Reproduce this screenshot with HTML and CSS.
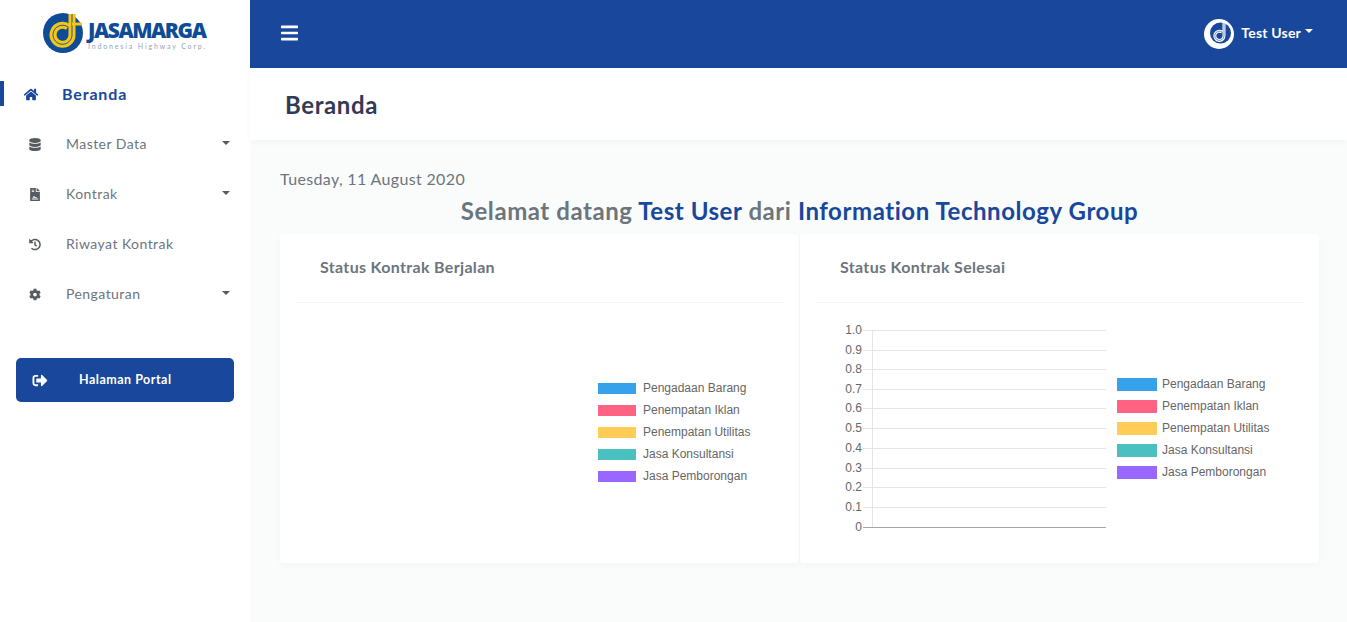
FILE: index.html
```html
<!DOCTYPE html>
<html lang="en">
<head>
  <meta charset="UTF-8" />
  <title>Beranda</title>
  <link rel="stylesheet" href="styles.css">
</head>
<body>
<div class="wrapper">

  <!-- Sidebar -->
  <aside class="sidebar">
    <div class="brand">
      <svg class="brand-mark" viewBox="0 0 40 40">
        <circle cx="20" cy="20" r="20" fill="#0f4c97"/>
        <path d="M25 14A9.5 9.5 0 1 0 29 21V1" fill="none" stroke="#f5c518" stroke-width="7"/>
        <path d="M25 14A9.5 9.5 0 1 0 29 21V1" fill="none" stroke="#0f4c97" stroke-width="0.9"/>
        <path d="M29 11H39" stroke="#f5c518" stroke-width="3"/>
      </svg>
      <div class="brand-text">
        <div class="brand-name">JASAMARGA</div>
        <div class="brand-sub">Indonesia Highway Corp.</div>
      </div>
    </div>

    <ul class="menu">
      <li class="menu-item active">
        <svg class="menu-icon" viewBox="0 0 576 512"><path d="M280.37 148.26L96 300.11V464a16 16 0 0 0 16 16l112.06-.29a16 16 0 0 0 15.92-16V368a16 16 0 0 1 16-16h64a16 16 0 0 1 16 16v95.64a16 16 0 0 0 16 16.05L464 480a16 16 0 0 0 16-16V300L295.67 148.26a12.19 12.19 0 0 0-15.3 0zM571.6 251.47L488 182.56V44.05a12 12 0 0 0-12-12h-56a12 12 0 0 0-12 12v72.61L318.47 43a48 48 0 0 0-61 0L4.34 251.47a12 12 0 0 0-1.6 16.9l25.5 31A12 12 0 0 0 45.15 301l235.22-193.74a12.19 12.19 0 0 1 15.3 0L530.9 301a12 12 0 0 0 16.9-1.6l25.5-31a12 12 0 0 0-1.7-16.93z"/></svg>
        <span class="menu-label">Beranda</span>
      </li>
      <li class="menu-item">
        <svg class="menu-icon" viewBox="0 0 448 512"><path d="M448 73.143v45.714C448 159.143 347.667 192 224 192S0 159.143 0 118.857V73.143C0 32.857 100.333 0 224 0s224 32.857 224 73.143zM448 176v102.857C448 319.143 347.667 352 224 352S0 319.143 0 278.857V176c48.125 33.143 136.208 48.572 224 48.572S399.874 209.143 448 176zm0 160v102.857C448 479.143 347.667 512 224 512S0 479.143 0 438.857V336c48.125 33.143 136.208 48.572 224 48.572S399.874 369.143 448 336z"/></svg>
        <span class="menu-label">Master Data</span>
        <span class="caret"></span>
      </li>
      <li class="menu-item">
        <svg class="menu-icon" viewBox="0 0 384 512"><path d="M377 105L279.1 7c-4.5-4.5-10.6-7-17-7H256v128h128v-6.1c0-6.3-2.5-12.4-7-16.9z"/><path fill-rule="evenodd" d="M224 136V0H24C10.7 0 0 10.7 0 24v464c0 13.3 10.7 24 24 24h336c13.3 0 24-10.7 24-24V160H248c-13.2 0-24-10.8-24-24zM64 64h96v32H64zm0 64h96v32H64zm0 288v32h256v-32zm32-32c30-50 50-70 64-70s20 40 40 40 30-10 60 0v30z"/></svg>
        <span class="menu-label">Kontrak</span>
        <span class="caret"></span>
      </li>
      <li class="menu-item">
        <svg class="menu-icon" viewBox="0 0 512 512"><path d="M504 255.531c.253 136.64-111.18 248.372-247.82 248.468-59.015.042-113.223-20.53-155.822-54.911-11.077-8.94-11.905-25.541-1.839-35.607l11.267-11.267c8.609-8.609 22.353-9.551 31.891-1.984C173.062 425.135 212.781 440 256 440c101.705 0 184-82.311 184-184 0-101.705-82.311-184-184-184-48.814 0-93.149 18.969-126.068 49.932l50.754 50.754c10.08 10.08 2.941 27.314-11.313 27.314H24c-8.837 0-16-7.163-16-16V38.627c0-14.254 17.234-21.393 27.314-11.314l49.372 49.372C129.209 34.136 189.552 8 256 8c136.81 0 247.747 110.78 248 247.531zm-180.912 78.784l9.823-12.63c8.138-10.463 6.253-25.542-4.21-33.679L288 256.349V152c0-13.255-10.745-24-24-24h-16c-13.255 0-24 10.745-24 24v135.651l65.409 50.874c10.463 8.137 25.541 6.253 33.679-4.21z"/></svg>
        <span class="menu-label">Riwayat Kontrak</span>
      </li>
      <li class="menu-item">
        <svg class="menu-icon" viewBox="0 0 512 512"><path d="M487.4 315.7l-42.6-24.6c4.3-23.2 4.3-47 0-70.2l42.6-24.6c4.9-2.8 7.1-8.6 5.5-14-11.1-35.6-30-67.8-54.7-94.6-3.8-4.1-10-5.1-14.8-2.3L380.8 110c-17.9-15.4-38.5-27.3-60.8-35.1V25.8c0-5.6-3.9-10.5-9.4-11.7-36.7-8.2-74.3-7.8-109.2 0-5.5 1.2-9.4 6.1-9.4 11.7V75c-22.2 7.9-42.8 19.8-60.8 35.1L88.7 85.5c-4.9-2.8-11-1.9-14.8 2.3-24.7 26.7-43.6 58.9-54.7 94.6-1.7 5.4.6 11.2 5.5 14L67.3 221c-4.3 23.2-4.3 47 0 70.2l-42.6 24.6c-4.9 2.8-7.1 8.6-5.5 14 11.1 35.6 30 67.8 54.7 94.6 3.8 4.1 10 5.1 14.8 2.3l42.6-24.6c17.9 15.4 38.5 27.3 60.8 35.1v49.2c0 5.6 3.9 10.5 9.4 11.7 36.7 8.2 74.3 7.8 109.2 0 5.5-1.2 9.4-6.1 9.4-11.7v-49.2c22.2-7.9 42.8-19.8 60.8-35.1l42.6 24.6c4.9 2.8 11 1.9 14.8-2.3 24.7-26.7 43.6-58.9 54.7-94.6 1.5-5.5-.7-11.3-5.6-14.1zM256 336c-44.1 0-80-35.9-80-80s35.9-80 80-80 80 35.9 80 80-35.9 80-80 80z"/></svg>
        <span class="menu-label">Pengaturan</span>
        <span class="caret"></span>
      </li>
    </ul>

    <a class="portal-btn" href="#">
      <svg class="portal-icon" viewBox="0 0 512 512"><path d="M497 273L329 441c-15 15-41 4.5-41-17v-96H152c-13.3 0-24-10.7-24-24v-96c0-13.3 10.7-24 24-24h136V88c0-21.4 25.9-32 41-17l168 168c9.3 9.4 9.3 24.6 0 34zM192 436v-40c0-6.6-5.4-12-12-12H96c-17.7 0-32-14.3-32-32V160c0-17.7 14.3-32 32-32h84c6.6 0 12-5.4 12-12V76c0-6.6-5.4-12-12-12H96c-53 0-96 43-96 96v192c0 53 43 96 96 96h84c6.6 0 12-5.4 12-12z"/></svg>
      <span>Halaman Portal</span>
    </a>
  </aside>

  <div class="main">
    <!-- Topbar -->
    <header class="topbar">
      <svg class="bars" viewBox="0 0 448 512"><path d="M16 132h416c8.837 0 16-7.163 16-16V76c0-8.837-7.163-16-16-16H16C7.163 60 0 67.163 0 76v40c0 8.837 7.163 16 16 16zm0 160h416c8.837 0 16-7.163 16-16v-40c0-8.837-7.163-16-16-16H16c-8.837 0-16 7.163-16 16v40c0 8.837 7.163 16 16 16zm0 160h416c8.837 0 16-7.163 16-16v-40c0-8.837-7.163-16-16-16H16c-8.837 0-16 7.163-16 16v40c0 8.837 7.163 16 16 16z"/></svg>
      <div class="user">
        <svg class="avatar" viewBox="0 0 30 30">
          <circle cx="15" cy="15" r="15" fill="#fff"/>
          <circle cx="16.5" cy="14" r="10.5" fill="#18479b"/>
          <path d="M18 13A4.6 4.6 0 1 0 20 17V4" fill="none" stroke="#fff" stroke-width="3"/>
          <path d="M18 13A4.6 4.6 0 1 0 20 17V4" fill="none" stroke="#18479b" stroke-width="0.6"/>
        </svg>
        <span class="user-name">Test User</span>
        <span class="caret caret-white"></span>
      </div>
    </header>

    <div class="page-title"><h1>Beranda</h1></div>

    <main class="content">
      <p class="date">Tuesday, 11 August 2020</p>
      <h2 class="welcome">Selamat datang <span>Test User</span> dari <span>Information Technology Group</span></h2>

      <div class="cards">
        <section class="card">
          <div class="card-head"><h3>Status Kontrak Berjalan</h3></div>
          <div class="card-body body-empty">
            <ul class="legend legend-sm">
              <li><i class="c-blue"></i>Pengadaan Barang</li>
              <li><i class="c-pink"></i>Penempatan Iklan</li>
              <li><i class="c-yellow"></i>Penempatan Utilitas</li>
              <li><i class="c-teal"></i>Jasa Konsultansi</li>
              <li><i class="c-purple"></i>Jasa Pemborongan</li>
            </ul>
          </div>
        </section>

        <section class="card">
          <div class="card-head"><h3>Status Kontrak Selesai</h3></div>
          <div class="card-body body-chart">
            <svg class="chart" viewBox="0 0 277 225" width="277" height="225">
              <g stroke="#e5e5e5" stroke-width="1">
                <path d="M33 15.5H276M33 35.5H276M33 54.5H276M33 74.5H276M33 93.5H276M33 113.5H276M33 133.5H276M33 153.5H276M33 172.5H276M33 192.5H276"/>
                <path d="M42.5 15V212"/>
              </g>
              <path d="M33 212.5H276" stroke="#a6a6a6"/>
              <g class="ticks" text-anchor="end">
                <text x="32" y="19">1.0</text>
                <text x="32" y="39">0.9</text>
                <text x="32" y="58">0.8</text>
                <text x="32" y="78">0.7</text>
                <text x="32" y="97">0.6</text>
                <text x="32" y="117">0.5</text>
                <text x="32" y="137">0.4</text>
                <text x="32" y="157">0.3</text>
                <text x="32" y="176">0.2</text>
                <text x="32" y="196">0.1</text>
                <text x="32" y="216">0</text>
              </g>
            </svg>
            <ul class="legend">
              <li><i class="c-blue"></i>Pengadaan Barang</li>
              <li><i class="c-pink"></i>Penempatan Iklan</li>
              <li><i class="c-yellow"></i>Penempatan Utilitas</li>
              <li><i class="c-teal"></i>Jasa Konsultansi</li>
              <li><i class="c-purple"></i>Jasa Pemborongan</li>
            </ul>
          </div>
        </section>
      </div>
    </main>
  </div>
</div>
</body>
</html>
```

FILE: styles.css
```css
* { box-sizing: border-box; }
html, body { height: 100%; }
body {
  margin: 0;
  font-family: 'Lato', 'Noto Sans', sans-serif;
  background: #fafcfc;
  color: #6c757d;
  overflow: hidden;
}
.wrapper { display: flex; height: 622px; }

/* sidebar */
.sidebar {
  width: 250px;
  flex: none;
  background: #fff;
}
.brand {
  height: 68px;
  padding: 13px 0 0 43px;
  display: flex;
  gap: 5px;
}
.brand-mark { width: 40px; height: 40px; flex: none; }
.brand-name {
  font-family: 'Open Sans', sans-serif;
  font-weight: 800;
  font-size: 21px;
  line-height: 18px;
  margin-top: 8px;
  color: #0f4c97;
  letter-spacing: -1.45px;
}
.brand-sub {
  font-size: 7px;
  line-height: 8px;
  margin-top: 3px;
  color: #8ea4bd;
  letter-spacing: 1.85px;
  white-space: nowrap;
}
.menu { list-style: none; margin: 1px 0 0; padding: 0; }
.menu-item {
  height: 50px;
  display: flex;
  align-items: center;
  padding-left: 29px;
  font-size: 14px;
  letter-spacing: 0.45px;
  color: #6c757d;
  position: relative;
}
.menu-icon { width: 12px; height: 13px; fill: #555b61; flex: none; margin-right: 25px; }
.menu-label { flex: 1; padding-bottom: 2px; }
.menu-item.active { padding-left: 23px; color: #18479b; font-weight: 700; font-size: 16px; letter-spacing: 0.85px; }
.menu-item.active:before {
  content: "";
  position: absolute;
  left: 0; top: 12px;
  width: 4px; height: 25px;
  background: #18479b;
}
.menu-item.active .menu-icon { width: 16px; fill: #18479b; margin-right: 23px; }
.caret {
  width: 0; height: 0;
  border-left: 4.5px solid transparent;
  border-right: 4.5px solid transparent;
  border-top: 4.5px solid #555b61;
  margin: 0 20px 3px 0;
}
.portal-btn {
  display: flex;
  align-items: center;
  height: 44px;
  margin: 39px 16px 0;
  padding-left: 16px;
  background: #18479b;
  border-radius: 5px;
  color: #fff;
  font-size: 12.5px;
  font-weight: 700;
  letter-spacing: 0.5px;
  text-decoration: none;
}
.portal-btn span { padding-bottom: 2px; }
.portal-icon { width: 16px; height: 15px; fill: #fff; margin-right: 31px; }

/* topbar */
.main { flex: 1; min-width: 0; }
.topbar {
  height: 68px;
  background: #18479b;
  display: flex;
  align-items: center;
  justify-content: space-between;
  padding: 0 34px 0 31px;
}
.bars { width: 17px; height: 20px; fill: #fff; margin-bottom: 2px; }
.user { display: flex; align-items: center; color: #fff; font-size: 14px; font-weight: 700; letter-spacing: 0.2px; }
.avatar { width: 30px; height: 30px; margin-right: 7px; }
.user-name { margin-bottom: 3px; }
.caret-white { border-top-color: #fff; margin: 0 0 6px 4px; }

.page-title {
  height: 72px;
  background: #fff;
  box-shadow: 0 2px 8px rgba(0,0,0,0.03);
  padding: 1px 0 0 35px;
  display: flex;
  align-items: center;
}
.page-title h1 { margin: 0; font-size: 24px; font-weight: 700; letter-spacing: 0.6px; color: #333a56; }

/* content */
.content { padding: 29px 28px 0 30px; }
.date { margin: 0; font-size: 16px; line-height: 20px; letter-spacing: 0.35px; color: #6c757d; }
.welcome {
  margin: 7px 0 9px;
  font-size: 24px;
  line-height: 29px;
  font-weight: 700;
  letter-spacing: 0.56px;
  text-align: center;
  color: #6c757d;
}
.welcome span { color: #18479b; }
.cards { display: flex; gap: 1px; }
.card {
  flex: 1;
  height: 329px;
  background: #fff;
  border-radius: 4px;
  box-shadow: 0 2px 8px rgba(0,0,0,0.03);
}
.card-head {
  height: 69px;
  margin: 0 15px;
  padding: 23px 0 0 25px;
  border-bottom: 1px solid #f3f5f6;
}
.card-head h3 { margin: 0; font-size: 16px; line-height: 20px; font-weight: 700; letter-spacing: 0.33px; color: #6c757d; }
.card-body { height: 260px; display: flex; align-items: center; }
.body-empty { padding-left: 318px; }
.body-chart { padding-left: 30px; }
.chart { flex: none; margin: -12px 0 0 0; display: block; }
.ticks { font-family: 'Liberation Sans', sans-serif; font-size: 12px; fill: #666; }

/* legend */
.legend {
  list-style: none;
  margin: 0;
  padding: 0;
  font-family: 'Liberation Sans', sans-serif;
  font-size: 12px;
  color: #666;
}
.legend-sm { margin-top: -2px; }
.body-chart .legend { margin: -10px 0 0 10px; }
.legend li { height: 22px; display: flex; align-items: center; white-space: nowrap; }
.legend i { width: 40px; height: 13px; margin-right: 5px; flex: none; }
.legend-sm i { width: 38px; height: 11px; margin-right: 7px; }
.c-blue { background: #36a2eb; }
.c-pink { background: #ff6384; }
.c-yellow { background: #ffcd56; }
.c-teal { background: #4bc0c0; }
.c-purple { background: #9966ff; }
```
